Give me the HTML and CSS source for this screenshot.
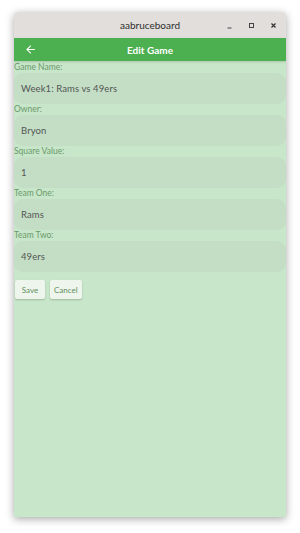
FILE: index.html
```html
<!DOCTYPE html>
<html lang="en">
<head>
    <meta charset="UTF-8">
    <meta name="viewport" content="width=device-width, initial-scale=1.0">
    <title>aabruceboard</title>
    <link rel="stylesheet" href="styles.css">
</head>
<body>
    <div class="window">
        <div class="titlebar">
            <span class="title">aabruceboard</span>
            <div class="controls">
                <span class="ctl">
                    <svg width="7" height="7" viewBox="0 0 7 7"><path d="M1.5 6 H5.5" stroke="#444" stroke-width="1"/></svg>
                </span>
                <span class="ctl">
                    <svg width="7" height="7" viewBox="0 0 7 7"><rect x="1.5" y="1.5" width="4" height="4" fill="none" stroke="#444" stroke-width="1"/></svg>
                </span>
                <span class="ctl">
                    <svg width="7" height="7" viewBox="0 0 7 7"><path d="M1.5 1.5 L5.5 5.5 M5.5 1.5 L1.5 5.5" stroke="#333" stroke-width="1.2"/></svg>
                </span>
            </div>
        </div>

        <div class="appbar">
            <svg class="back" width="13" height="13" viewBox="0 0 24 24"><path d="M20 11H7.83l5.59-5.59L12 4l-8 8 8 8 1.41-1.41L7.83 13H20v-2z" fill="#fff"/></svg>
            <span class="appbar-title">Edit Game</span>
        </div>

        <div class="content">
            <div class="field">
                <label>Game Name:</label>
                <div class="input">Week1: Rams vs 49ers</div>
            </div>
            <div class="field">
                <label>Owner:</label>
                <div class="input">Bryon</div>
            </div>
            <div class="field">
                <label>Square Value:</label>
                <div class="input">1</div>
            </div>
            <div class="field">
                <label>Team One:</label>
                <div class="input">Rams</div>
            </div>
            <div class="field">
                <label>Team Two:</label>
                <div class="input">49ers</div>
            </div>

            <div class="buttons">
                <button class="btn">Save</button>
                <button class="btn">Cancel</button>
            </div>
        </div>
    </div>
</body>
</html>
```

FILE: styles.css
```css
body {
    margin: 0;
    padding: 12px 14px 16px;
    background: #ffffff;
    font-family: Lato, "Open Sans", sans-serif;
}

.window {
    width: 272px;
    height: 505px;
    display: flex;
    flex-direction: column;
    border-radius: 4px 4px 0 0;
    overflow: hidden;
    box-shadow: 0 2px 8px rgba(0, 0, 0, 0.35);
}

.titlebar {
    height: 26px;
    background: #e1dedb;
    display: flex;
    align-items: center;
    justify-content: center;
    position: relative;
}

.title {
    font-size: 10px;
    color: #2e2e2e;
}

.controls {
    position: absolute;
    right: 9px;
    top: 0;
    height: 26px;
    display: flex;
    align-items: center;
    gap: 15px;
}

.ctl {
    width: 7px;
    display: flex;
    justify-content: center;
}

.appbar {
    height: 23px;
    background: #4caf50;
    display: flex;
    align-items: center;
    position: relative;
    box-shadow: 0 1px 2px rgba(0, 0, 0, 0.15);
}

.back {
    position: absolute;
    left: 10px;
}

.appbar-title {
    flex: 1;
    text-align: center;
    color: #ffffff;
    font-weight: bold;
    font-size: 10px;
}

.content {
    flex: 1;
    background: #c8e6c9;
    padding-top: 1px;
}

.field {
    display: flex;
    flex-direction: column;
}

.field label {
    font-size: 8.5px;
    color: #6a9a6b;
    height: 10px;
    line-height: 10px;
}

.input {
    height: 31px;
    margin-top: 1px;
    border-radius: 9px;
    background: #c3dec5;
    display: flex;
    align-items: center;
    padding-left: 7px;
    font-size: 9.5px;
    letter-spacing: 0.1px;
    color: #555555;
}

.buttons {
    display: flex;
    gap: 5px;
    padding: 8px 0 0 1px;
}

.btn {
    min-width: 30px;
    height: 19px;
    padding: 0 4px;
    border: none;
    border-radius: 2px;
    background: #eef5ec;
    box-shadow: 0 1px 2px rgba(0, 0, 0, 0.2);
    font-family: Lato, "Open Sans", sans-serif;
    font-size: 8px;
    color: #5e8f60;
}
```
